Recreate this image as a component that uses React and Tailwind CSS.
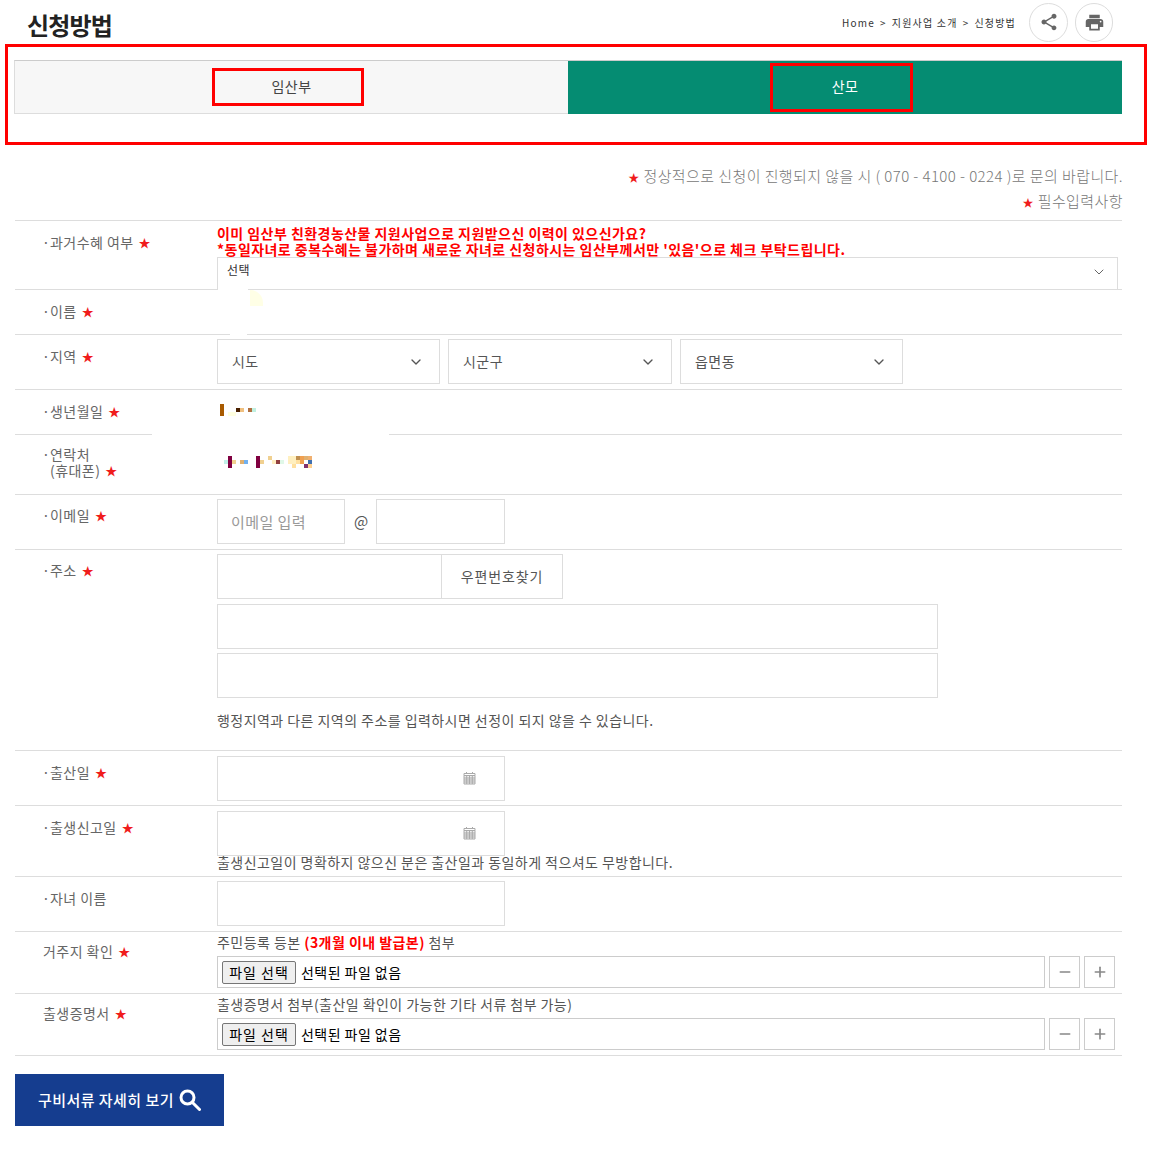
import { ChevronDown, Minus, Plus } from "lucide-react";
import { MdShare, MdPrint } from "react-icons/md";

const font = { fontFamily: '"Noto Sans CJK KR", "Noto Sans", sans-serif' };

function Star() {
  return <span className="text-[#f01c1c] text-[12px] ml-[5px]">★</span>;
}

function Label({ children, dot = true, top = "pt-[13px]" }) {
  return (
    <div className={`w-[202px] shrink-0 pl-[27px] ${top} text-[14px] leading-[16px] text-[#666]`}>
      {dot && <span className="inline-block w-[8px]">·</span>}
      {!dot && <span className="inline-block w-[1px]" />}
      {children}
    </div>
  );
}

function Row({ height, children, className = "" }) {
  return (
    <div className={`relative flex border-b border-[#ddd] ${height} ${className}`}>{children}</div>
  );
}

function SelectBox({ text, width }) {
  return (
    <div className={`${width} h-[45px] border border-[#ddd] flex items-center justify-between pl-[14px] pr-[15px] text-[14px] text-[#555]`}>
      {text}
      <ChevronDown size={16} strokeWidth={2} className="text-[#555]" />
    </div>
  );
}

function TextBox({ width, placeholder }) {
  return (
    <input
      placeholder={placeholder}
      className={`${width} h-[45px] border border-[#ddd] px-[13px] text-[15px] placeholder:text-[#999] outline-none`}
    />
  );
}

function DateBox() {
  return (
    <div className="w-[288px] h-[45px] border border-[#ddd] flex items-center justify-end pr-[28px]">
      <svg width="13" height="13" viewBox="0 0 13 13" fill="none" stroke="#aaa" strokeWidth="1">
        <path d="M1 3.5h11v8.5H1z" fill="#eee" />
        <path d="M1 1.5h11v2H1zM3.5 0v2M9.5 0v2M1 6h11M1 8h11M1 10h11M3.7 4v8M6.5 4v8M9.3 4v8" />
      </svg>
    </div>
  );
}

function FileRow() {
  return (
    <div className="flex mt-[4px]">
      <div className="w-[828px] h-[32px] border border-[#ccc] flex items-center pl-[4px] text-[14px] text-black">
        <span className="h-[23px] w-[74px] flex items-center justify-center bg-[#efefef] border border-[#767676] rounded-[2px] tracking-[1px]">
          파일 선택
        </span>
        <span className="ml-[5px]">선택된 파일 없음</span>
      </div>
      <div className="w-[31px] h-[32px] ml-[4px] border border-[#ccc] flex items-center justify-center text-[#888]">
        <Minus size={16} strokeWidth={2.5} />
      </div>
      <div className="w-[31px] h-[32px] ml-[4px] border border-[#ccc] flex items-center justify-center text-[#888]">
        <Plus size={16} strokeWidth={2.5} />
      </div>
    </div>
  );
}

// small mosaic squares left in the picture
function Pixels({ items, className }) {
  return (
    <div className={`absolute flex items-start ${className}`}>
      {items.map((c, i) => (
        <span key={i} className="block w-[4px] h-[4px]" style={{ background: c }} />
      ))}
    </div>
  );
}

export default function App() {
  return (
    <div style={font} className="w-[1170px] h-[1156px] bg-white overflow-hidden tracking-[0.45px]">
      {/* header */}
      <div className="h-[44px] pl-[27px] pr-[57px] flex items-center">
        <h1 className="text-[24px] font-bold text-[#222] tracking-[-0.8px] pt-[5px]">신청방법</h1>
        <div className="ml-auto flex items-center text-[10px] text-[#333] gap-[5px] tracking-[1.2px]">
          <span>Home</span>
          <span>&gt;</span>
          <span>지원사업 소개</span>
          <span>&gt;</span>
          <span>신청방법</span>
        </div>
        <button className="ml-[13px] w-[39px] h-[39px] rounded-full border border-[#ddd] flex items-center justify-center text-[#666]">
          <MdShare size={20} />
        </button>
        <button className="ml-[7px] w-[38px] h-[39px] rounded-full border border-[#ddd] flex items-center justify-center text-[#666]">
          <MdPrint size={21} />
        </button>
      </div>

      {/* red frame with tabs */}
      <div className="ml-[5px] w-[1142px] h-[101px] border-[3px] border-[#f00] pt-[13px] pl-[6px]">
        <div className="flex w-[1108px] h-[54px] text-[14px]">
          <div className="w-[554px] bg-[#f7f7f7] border border-[#ddd] border-t-[#ccc] border-r-0 flex items-center justify-center text-[#444]">
            <span className="w-[152px] h-[38px] border-[3px] border-[#f00] flex items-center justify-center pl-[7px] pb-[2px] -ml-[7px]">임산부</span>
          </div>
          <div className="w-[554px] bg-[#058c72] border-t border-[#ccc] flex items-center justify-center text-white pb-[1px]">
            <span className="w-[143px] h-[49px] border-[3px] border-[#f00] flex items-center justify-center pl-[7px] pb-[1px] -ml-[7px]">산모</span>
          </div>
        </div>
      </div>

      {/* notice */}
      <div className="mt-[18px] w-[1123px] text-right text-[15px] leading-[25px] text-[#777] font-light tracking-[0.42px]">
        <p className="h-[25px]"><span className="text-[#f01c1c] text-[11px] leading-none">★</span> 정상적으로 신청이 진행되지 않을 시 ( 070 - 4100 - 0224 )로 문의 바랍니다.</p>
        <p className="h-[25px]"><span className="text-[#f01c1c] text-[11px] leading-none">★</span> 필수입력사항</p>
      </div>

      {/* form */}
      <div className="mt-[7px] ml-[15px] w-[1107px] border-t border-[#ddd]">
        <Row height="h-[69px]">
          <Label>과거수혜 여부<Star /></Label>
          <div className="relative flex-1 pt-[4px]">
            <p className="text-[14px] leading-[16px] font-bold text-[#f00]">이미 임산부 친환경농산물 지원사업으로 지원받으신 이력이 있으신가요?</p>
            <p className="text-[14px] leading-[16px] font-bold text-[#f00]">*동일자녀로 중복수혜는 불가하며 새로운 자녀로 신청하시는 임산부께서만 '있음'으로 체크 부탁드립니다.</p>
            <div className="w-[901px] h-[32px] border border-b-0 border-[#ddd] flex justify-between pl-[9px] pr-[10px] pt-[3px] text-[12px] text-[#333]">
              선택
              <ChevronDown size={16} strokeWidth={1.5} className="text-[#666] mt-[3px]" />
            </div>
          </div>
          <div className="absolute left-[203px] top-[62px] w-[30px] h-[30px] bg-white" />
          <div className="absolute left-[235px] top-[69px] w-[13px] h-[16px] bg-[#ffffe6] rounded-tr-[13px]" />
        </Row>
        <Row height="h-[45px]">
          <Label>이름<Star /></Label>
          <div className="absolute left-[215px] top-[40px] w-[17px] h-[8px] bg-white" />
        </Row>
        <Row height="h-[55px]">
          <Label>지역<Star /></Label>
          <div className="flex gap-[8px] pt-[4px]">
            <SelectBox text="시도" width="w-[223px]" />
            <SelectBox text="시군구" width="w-[224px]" />
            <SelectBox text="읍면동" width="w-[223px]" />
          </div>
        </Row>
        <Row height="h-[45px]">
          <Label>생년월일<Star /></Label>
          <div className="absolute left-[205px] top-[14px] w-[4px] h-[12px] bg-[#a85a00]" />
          <Pixels className="left-[213px] top-[22px]" items={["#ffffe0", "#ffffe0"]} />
          <Pixels className="left-[221px] top-[18px]" items={["#4a2000", "#f0c080", "#fff", "#b07040", "#c0f0e0"]} />
          <div className="absolute left-[137px] top-[43px] w-[237px] h-[3px] bg-white" />
        </Row>
        <Row height="h-[60px]">
          <div className="w-[202px] shrink-0 pl-[27px] pt-[11px] text-[14px] leading-[16px] text-[#666]">
            <div><span className="inline-block w-[8px]">·</span>연락처</div>
            <div className="pl-[8px]">(휴대폰)<Star /></div>
          </div>
          <div className="absolute left-[213px] top-[21px] w-[4px] h-[12px] bg-[#800040]" />
          <Pixels className="left-[209px] top-[25px]" items={["#c0f0e8"]} />
          <Pixels className="left-[217px] top-[25px]" items={["#f0d090", "#fff", "#e0b070", "#70b0f0"]} />
          <div className="absolute left-[241px] top-[21px] w-[4px] h-[12px] bg-[#800040]" />
          <Pixels className="left-[245px] top-[25px]" items={["#f0d090", "#fff", "#fff", "#ffeec0", "#904040", "#e0f8e8"]} />
          <Pixels className="left-[253px] top-[21px]" items={["#f0d090"]} />
          <Pixels className="left-[273px] top-[21px]" items={["#fff0c0", "#fff0c0", "#c09050", "#f0a050", "#e0b070", "#f0b070"]} />
          <Pixels className="left-[273px] top-[25px]" items={["#ffeec0", "#fff0c0", "#ffe0a0", "#f0a050", "#fff", "#4070b0"]} />
          <Pixels className="left-[277px] top-[29px]" items={["#ffe0a0", "#fff", "#fff", "#803070", "#ffd090"]} />
        </Row>
        <Row height="h-[55px]">
          <Label top="pt-[12px]">이메일<Star /></Label>
          <div className="flex items-center gap-[8px] pt-[4px] h-[49px]">
            <TextBox width="w-[128px]" placeholder="이메일 입력" />
            <span className="text-[15px] text-[#555] ml-[1px] -mr-[1px]">@</span>
            <TextBox width="w-[129px]" />
          </div>
        </Row>
        <Row height="h-[201px]">
          <Label top="pt-[12px]">주소<Star /></Label>
          <div className="pt-[4px]">
            <div className="flex">
              <TextBox width="w-[225px]" />
              <div className="w-[121px] h-[45px] border border-l-0 border-[#ddd] flex items-center justify-center text-[14px] text-[#555] tracking-[0.9px]">우편번호찾기</div>
            </div>
            <TextBox width="w-[721px] mt-[5px] block" />
            <TextBox width="w-[721px] mt-[4px] block" />
            <p className="mt-[12px] text-[14px] leading-[20px] text-[#555]">행정지역과 다른 지역의 주소를 입력하시면 선정이 되지 않을 수 있습니다.</p>
          </div>
        </Row>
        <Row height="h-[55px]">
          <Label>출산일<Star /></Label>
          <div className="pt-[5px]"><DateBox /></div>
        </Row>
        <Row height="h-[71px]">
          <Label>출생신고일<Star /></Label>
          <div className="pt-[5px]">
            <DateBox />
            <p className="text-[14px] leading-[12px] text-[#555] whitespace-nowrap">출생신고일이 명확하지 않으신 분은 출산일과 동일하게 적으셔도 무방합니다.</p>
          </div>
        </Row>
        <Row height="h-[55px]">
          <Label>자녀 이름</Label>
          <div className="pt-[4px]"><TextBox width="w-[288px]" /></div>
        </Row>
        <Row height="h-[62px]">
          <Label dot={false} top="pt-[11px]">거주지 확인<Star /></Label>
          <div>
            <p className="text-[14px] leading-[20px] text-[#555]">주민등록 등본 <b className="text-[#f00]">(3개월 이내 발급본)</b> 첨부</p>
            <FileRow />
          </div>
        </Row>
        <Row height="h-[62px]">
          <Label dot={false} top="pt-[11px]">출생증명서<Star /></Label>
          <div>
            <p className="text-[14px] leading-[20px] text-[#555]">출생증명서 첨부(출산일 확인이 가능한 기타 서류 첨부 가능)</p>
            <FileRow />
          </div>
        </Row>
      </div>

      <button className="mt-[18px] ml-[15px] w-[209px] h-[52px] bg-[#153d8f] flex items-center justify-center gap-[5px] text-white text-[15px] font-medium">
        구비서류 자세히 보기
        <svg width="22" height="22" viewBox="0 0 22 22" fill="none" stroke="currentColor" strokeWidth="3">
          <circle cx="8.5" cy="8.5" r="6.5" />
          <path d="M13.5 13.5 20.5 20.5" strokeLinecap="round" />
        </svg>
      </button>
    </div>
  );
}
